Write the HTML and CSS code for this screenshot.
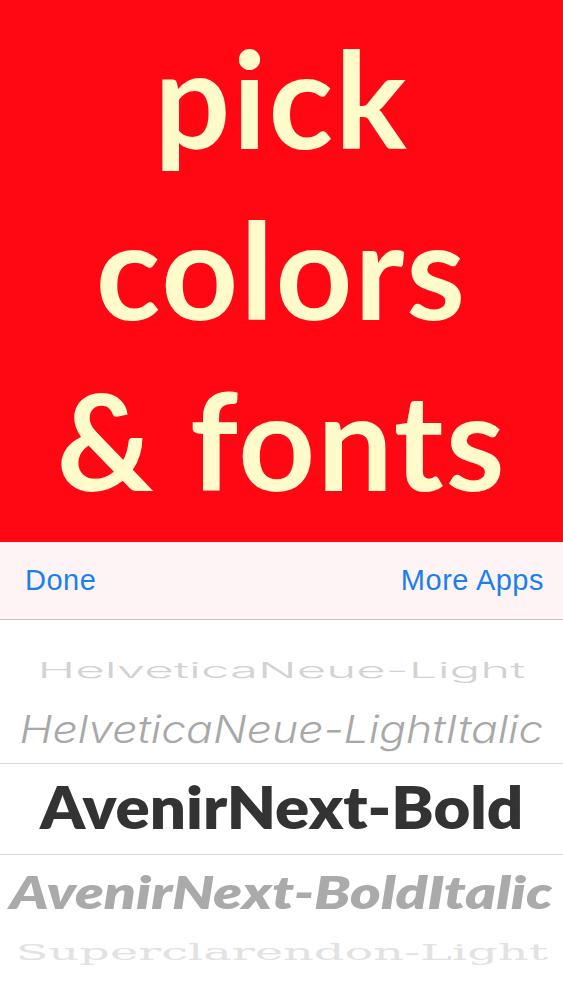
FILE: index.html
```html
<!DOCTYPE html>
<html lang="en">
<head>
    <meta charset="UTF-8">
    <meta name="viewport" content="width=device-width, initial-scale=1.0">
    <title>Pick Colors &amp; Fonts</title>
    <link rel="stylesheet" href="styles.css">
</head>
<body>
    <div class="preview">
        <div class="line">pick</div>
        <div class="line">colors</div>
        <div class="line">&amp; fonts</div>
    </div>
    <div class="toolbar">
        <span class="btn">Done</span>
        <span class="btn">More Apps</span>
    </div>
    <div class="picker">
        <div class="row r1"><span>HelveticaNeue-Light</span></div>
        <div class="row r2"><span>HelveticaNeue-LightItalic</span></div>
        <div class="row selected"><span>AvenirNext-Bold</span></div>
        <div class="row r4"><span>AvenirNext-BoldItalic</span></div>
        <div class="row r5"><span>Superclarendon-Light</span></div>
    </div>
</body>
</html>
```

FILE: styles.css
```css
body {
    margin: 0;
    font-family: "Liberation Sans", Arial, sans-serif;
    background: #fff;
    overflow: hidden;
}
.preview {
    height: 542px;
    padding-top: 12px;
    box-sizing: border-box;
    background: #ff0713;
    color: #fffbca;
    font-family: Lato, "Open Sans", sans-serif;
    font-weight: 700;
    font-size: 134px;
    line-height: 171px;
    letter-spacing: 2px;
    text-align: center;
}
.toolbar {
    height: 77px;
    display: flex;
    align-items: center;
    justify-content: space-between;
    padding: 0 19px 0 25px;
    background: #fff4f5;
    border-bottom: 1px solid #c4c4c4;
}
.btn {
    color: #1a7ff0;
    font-size: 29px;
    line-height: 1;
    letter-spacing: 0.5px;
}
.picker {
    padding-top: 25px;
    background: #fff;
}
.row {
    display: flex;
    align-items: center;
    justify-content: center;
    white-space: nowrap;
}
.row span {
    display: inline-block;
    line-height: 1;
}
.r1 {
    height: 50px;
}
.r1 span {
    font-family: Inter, "Liberation Sans", sans-serif;
    font-weight: 300;
    font-size: 51px;
    color: #d2d2d2;
    transform: scale(1, 0.43);
}
.r2 {
    height: 68px;
}
.r2 span {
    font-family: Inter, "Liberation Sans", sans-serif;
    font-weight: 300;
    font-style: italic;
    font-size: 44.5px;
    color: #a8a8a8;
    transform: scale(1, 0.865);
}
.selected {
    height: 92px;
    padding-bottom: 4px;
    box-sizing: border-box;
    border-top: 1px solid #d9d9d9;
    border-bottom: 1px solid #d9d9d9;
}
.selected span {
    font-family: Lato, sans-serif;
    font-weight: 800;
    font-size: 58px;
    color: #333;
    transform: scale(1.095, 1);
}
.r4 {
    height: 74px;
}
.r4 span {
    font-family: Lato, sans-serif;
    font-weight: 800;
    font-style: italic;
    font-size: 56px;
    color: #aaa;
    transform: scale(1.043, 0.8);
}
.r5 {
    height: 45px;
}
.r5 span {
    font-family: "DejaVu Serif", serif;
    font-size: 46px;
    color: #e2e2e2;
    transform: scale(1.04, 0.5);
}
```
